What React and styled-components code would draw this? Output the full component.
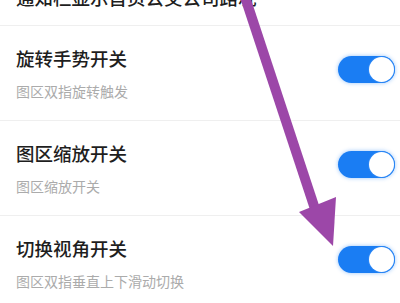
import React from "react";
import styled, { createGlobalStyle } from "styled-components";

const GlobalStyle = createGlobalStyle`
    html, body {
        margin: 0;
        padding: 0;
        background: #ffffff;
        overflow: hidden;
    }
    body {
        font-family: "Noto Sans CJK SC", "Noto Sans", sans-serif;
    }
`;

const Page = styled.div`
    position: relative;
    width: 400px;
    height: 303px;
    overflow: hidden;
    background: #fff;
`;

const List = styled.div`
    display: flex;
    flex-direction: column;
    margin-top: -15px;
`;

const TopRow = styled.div`
    padding: 0 16px 16px;
    border-bottom: 1px solid #efefef;
`;

const Row = styled.div`
    display: flex;
    align-items: center;
    justify-content: space-between;
    height: 95px;
    box-sizing: border-box;
    padding: 0 5px 7px 16px;
    border-bottom: 1px solid #efefef;
`;

const Texts = styled.div`
    align-self: flex-start;
    display: flex;
    flex-direction: column;
    gap: 11px;
    padding-top: 20px;
`;

const Title = styled.div`
    font-size: 18.5px;
    line-height: 24px;
    font-weight: 500;
    color: #1e1e1e;
    white-space: nowrap;
`;

const Sub = styled.div`
    font-size: 14px;
    line-height: 20px;
    color: #ababab;
    white-space: nowrap;
`;

const Switch = styled.div`
    display: flex;
    align-items: center;
    justify-content: flex-end;
    width: 57px;
    height: 27px;
    box-sizing: border-box;
    padding: 1px;
    border-radius: 14px;
    background: #1a7df3;
    box-shadow: 0 0 4px rgba(26, 125, 243, 0.45);
`;

const Knob = styled.div`
    width: 25px;
    height: 25px;
    border-radius: 50%;
    background: #fff;
    box-shadow: 0 0 0 1px #2a86f5;
`;

const Arrow = styled.svg`
    position: absolute;
    left: 0;
    top: 0;
    pointer-events: none;
`;

const items = [
    { title: "旋转手势开关", sub: "图区双指旋转触发" },
    { title: "图区缩放开关", sub: "图区缩放开关" },
    { title: "切换视角开关", sub: "图区双指垂直上下滑动切换" },
];

const App = () => {
    return (
        <Page>
            <GlobalStyle />
            <List>
                <TopRow>
                    <Title>通知栏显示首页公交公司路况</Title>
                </TopRow>
                {items.map((item) => (
                    <Row key={item.title}>
                        <Texts>
                            <Title>{item.title}</Title>
                            <Sub>{item.sub}</Sub>
                        </Texts>
                        <Switch>
                            <Knob />
                        </Switch>
                    </Row>
                ))}
            </List>
            {/* annotation arrow */}
            <Arrow width="400" height="303" viewBox="0 0 400 303">
                <line x1="244" y1="-6" x2="316" y2="212" stroke="#9c47a8" strokeWidth="10" />
                <polygon points="299,212 336,197 333,246" fill="#9c47a8" />
            </Arrow>
        </Page>
    );
};

export default App;
